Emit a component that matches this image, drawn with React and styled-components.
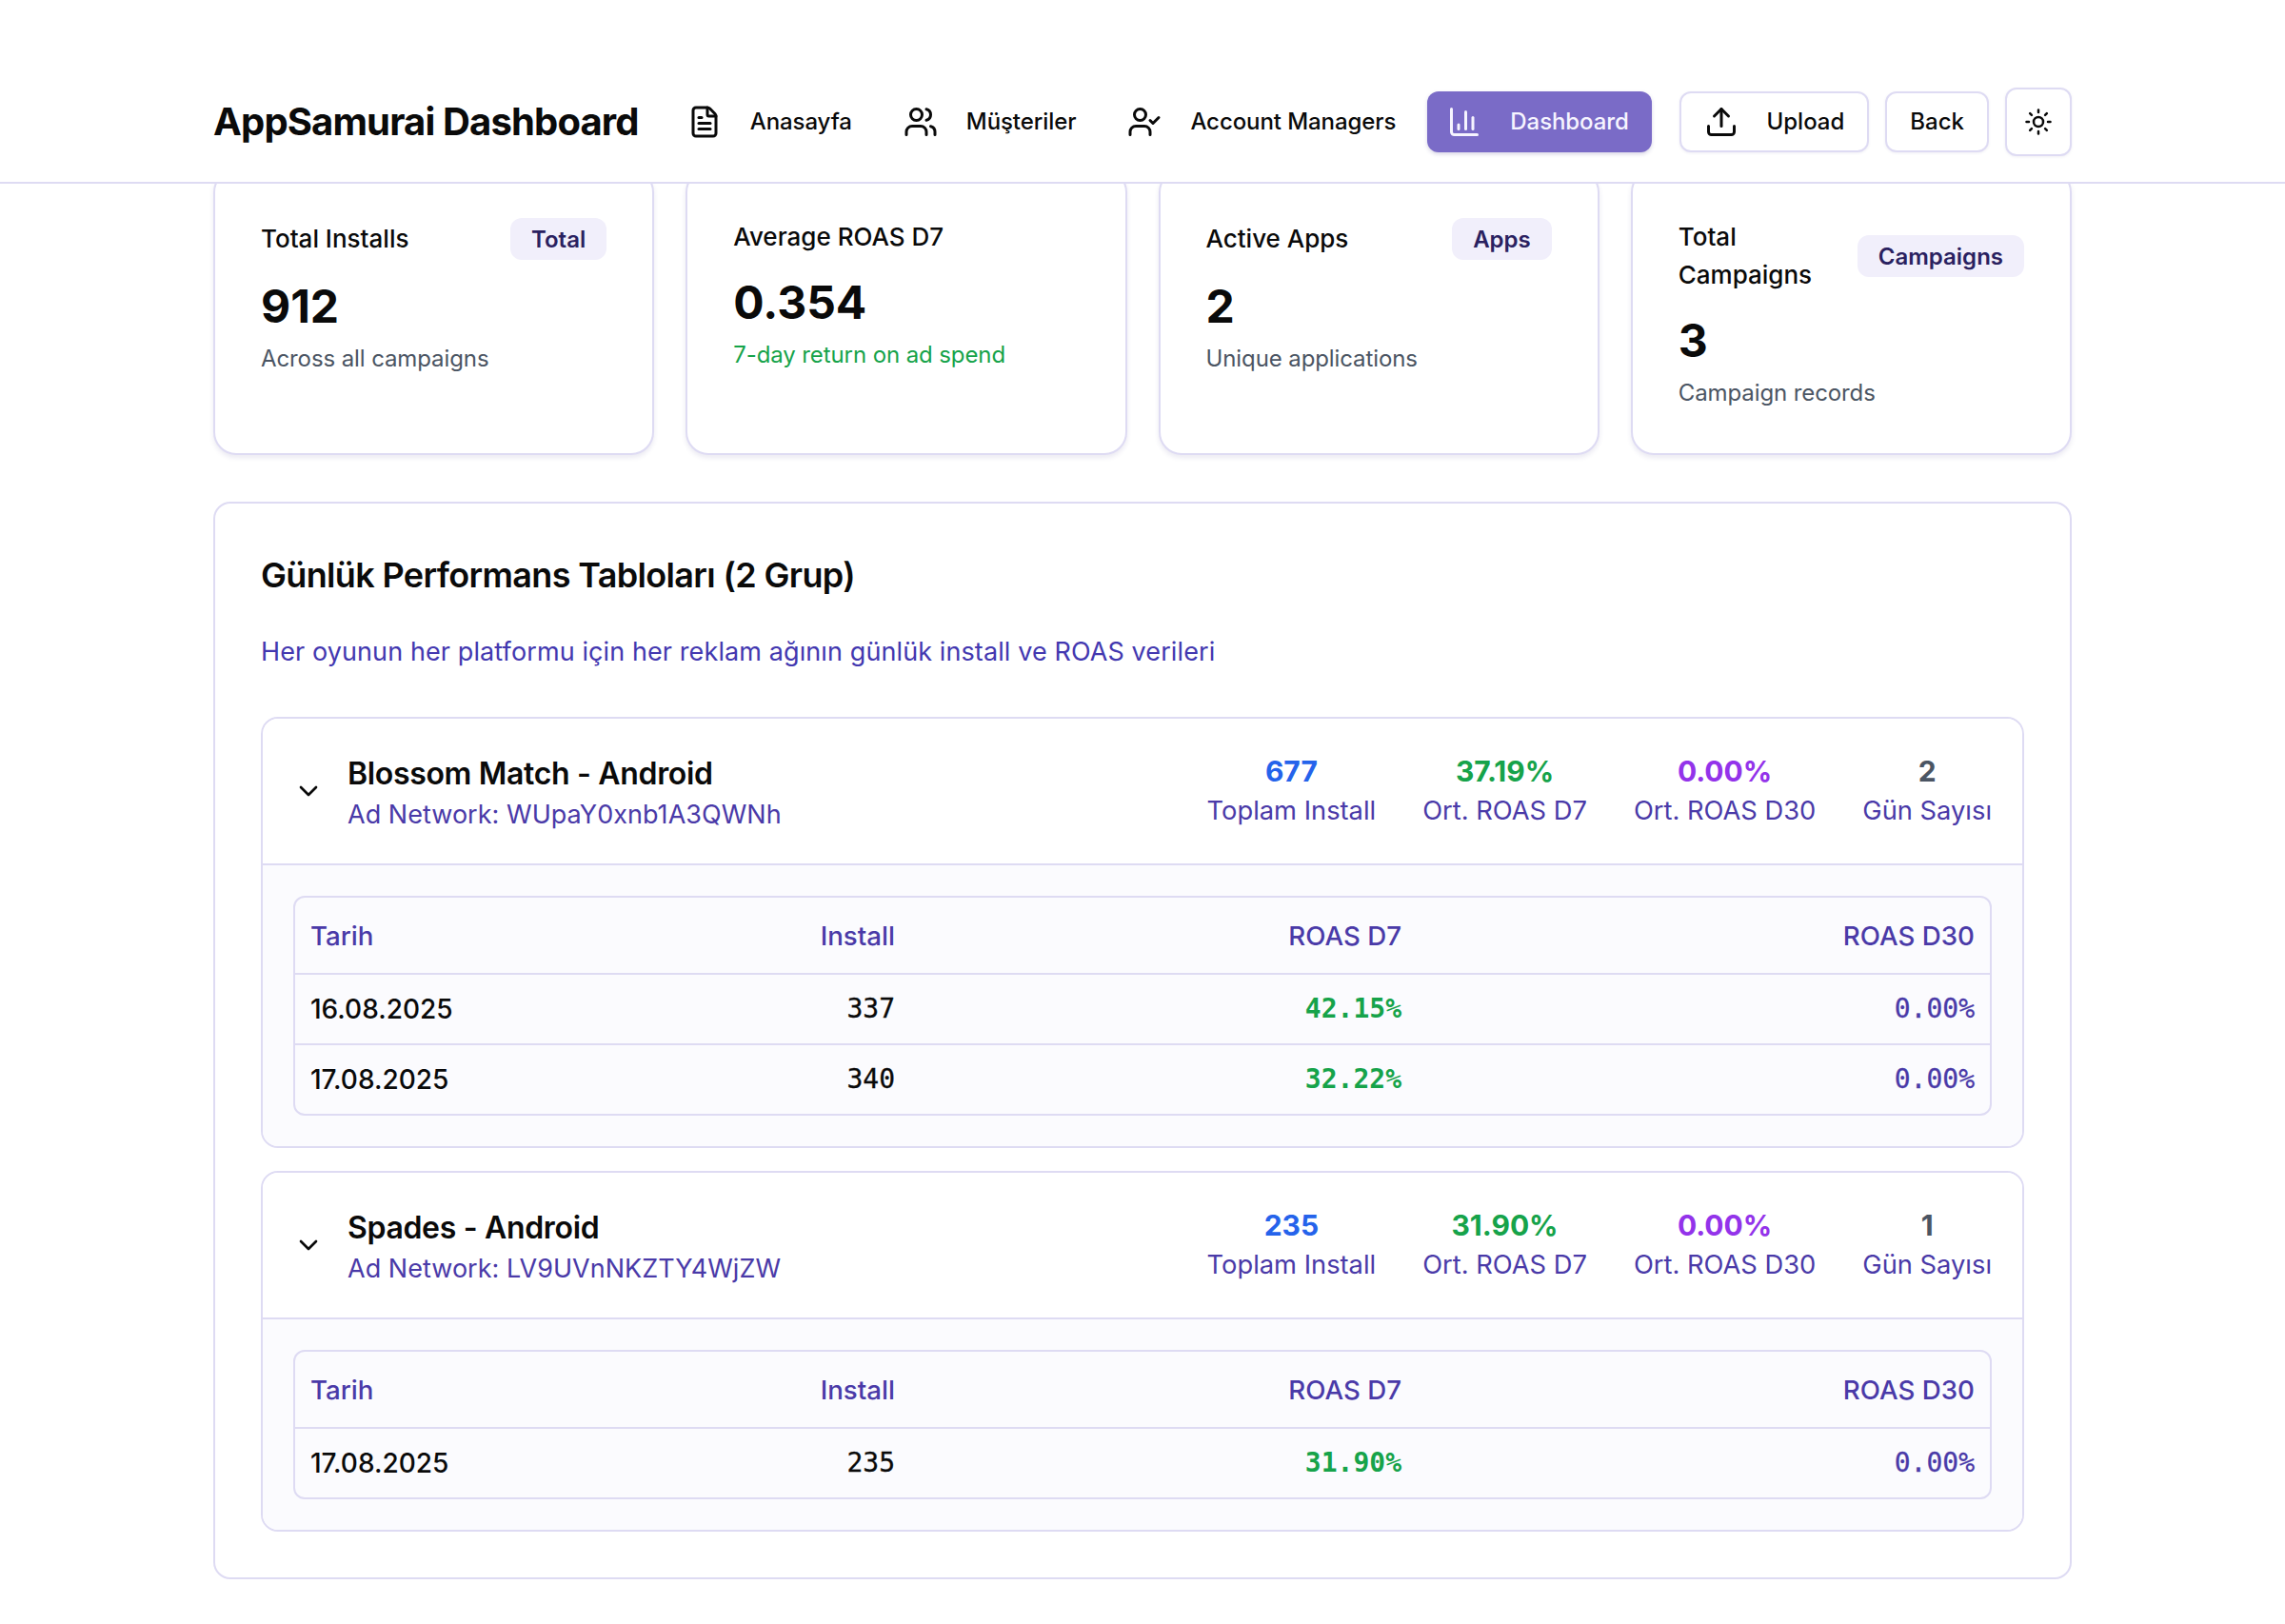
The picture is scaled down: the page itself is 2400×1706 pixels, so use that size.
import React from "react";
import styled, { createGlobalStyle } from "styled-components";
import { FileText, Users, UserCheck, ChartColumn, Upload, Sun, ChevronDown } from "lucide-react";

const cards = [
  { title: "Total Installs", badge: "Total", value: "912", note: "Across all campaigns" },
  { title: "Average ROAS D7", value: "0.354", note: "7-day return on ad spend", good: true },
  { title: "Active Apps", badge: "Apps", value: "2", note: "Unique applications" },
  { title: "Total Campaigns", badge: "Campaigns", value: "3", note: "Campaign records", narrow: true },
];

const groups = [
  {
    name: "Blossom Match - Android",
    network: "WUpaY0xnb1A3QWNh",
    installs: "677",
    d7: "37.19%",
    d30: "0.00%",
    days: "2",
    rows: [
      ["16.08.2025", "337", "42.15%", "0.00%"],
      ["17.08.2025", "340", "32.22%", "0.00%"],
    ],
  },
  {
    name: "Spades - Android",
    network: "LV9UVnNKZTY4WjZW",
    installs: "235",
    d7: "31.90%",
    d30: "0.00%",
    days: "1",
    rows: [["17.08.2025", "235", "31.90%", "0.00%"]],
  },
];

const App = () => {
  return (
    <>
      <GlobalStyle />
      <Header>
        <HeaderInner>
          <Brand>AppSamurai Dashboard</Brand>
          <Nav>
            <NavItem><FileText size={36} strokeWidth={2} />Anasayfa</NavItem>
            <NavItem><Users size={36} strokeWidth={2} />Müşteriler</NavItem>
            <NavItem><UserCheck size={36} strokeWidth={2} />Account Managers</NavItem>
            <NavItem $active><ChartColumn size={36} strokeWidth={2} />Dashboard</NavItem>
          </Nav>
          <Actions>
            <OutlineButton><Upload size={36} strokeWidth={2} />Upload</OutlineButton>
            <OutlineButton>Back</OutlineButton>
            <ThemeButton><Sun size={30} strokeWidth={2} /></ThemeButton>
          </Actions>
        </HeaderInner>
      </Header>
      <Main>
        <CardGrid>
          {cards.map((c) => (
            <Card key={c.title}>
              <CardHead>
                <CardTitle $narrow={c.narrow}>{c.title}</CardTitle>
                {c.badge && <Badge>{c.badge}</Badge>}
              </CardHead>
              <CardValue>{c.value}</CardValue>
              <CardNote $good={c.good}>{c.note}</CardNote>
            </Card>
          ))}
        </CardGrid>

        <Panel>
          <PanelTitle>Günlük Performans Tabloları (2 Grup)</PanelTitle>
          <PanelDesc>Her oyunun her platformu için her reklam ağının günlük install ve ROAS verileri</PanelDesc>
          <GroupList>
            {groups.map((g) => (
              <Group key={g.name}>
                <GroupHead>
                  <GroupLeft>
                    <ChevronDown size={32} strokeWidth={2} />
                    <GroupText>
                      <GroupName>{g.name}</GroupName>
                      <GroupNetwork>Ad Network: {g.network}</GroupNetwork>
                    </GroupText>
                  </GroupLeft>
                  <Stats>
                    <Stat><StatValue $color="#2563eb">{g.installs}</StatValue><StatLabel>Toplam Install</StatLabel></Stat>
                    <Stat><StatValue $color="#16a34a">{g.d7}</StatValue><StatLabel>Ort. ROAS D7</StatLabel></Stat>
                    <Stat><StatValue $color="#9333ea">{g.d30}</StatValue><StatLabel>Ort. ROAS D30</StatLabel></Stat>
                    <Stat><StatValue $color="#4b5563">{g.days}</StatValue><StatLabel>Gün Sayısı</StatLabel></Stat>
                  </Stats>
                </GroupHead>
                <GroupBody>
                  <TableWrap>
                    <TableHeadRow>
                      <HeadCell>Tarih</HeadCell>
                      <HeadCell $right>Install</HeadCell>
                      <HeadCell $right>ROAS D7</HeadCell>
                      <HeadCell $right>ROAS D30</HeadCell>
                    </TableHeadRow>
                    {g.rows.map((r) => (
                      <TableRow key={r[0]}>
                        <DateCell>{r[0]}</DateCell>
                        <NumCell>{r[1]}</NumCell>
                        <NumCell $color="#16a34a" $bold>{r[2]}</NumCell>
                        <NumCell $color="#4a3aa8">{r[3]}</NumCell>
                      </TableRow>
                    ))}
                  </TableWrap>
                </GroupBody>
              </Group>
            ))}
          </GroupList>
        </Panel>
      </Main>
    </>
  );
};

const GlobalStyle = createGlobalStyle`
  * { box-sizing: border-box; }
  body {
    margin: 0;
    background: #fff;
    color: #0a0a0a;
    font-family: Inter, "Noto Sans", sans-serif;
  }
`;

const Header = styled.header`
  position: relative;
  z-index: 2;
  height: 193px;
  background: #fff;
  border-bottom: 2px solid #dedbf3;
`;

const HeaderInner = styled.div`
  width: 1952px;
  height: 100%;
  margin: 0 auto;
  padding-top: 64px;
  display: flex;
  align-items: center;
`;

const Brand = styled.h1`
  margin: 0 30px 0 0;
  font-size: 40px;
  font-weight: 700;
  letter-spacing: -0.85px;
  white-space: nowrap;
`;

const Nav = styled.nav`
  display: flex;
  align-items: center;
  gap: 9px;
`;

const NavItem = styled.a`
  display: flex;
  align-items: center;
  gap: 30px;
  height: 64px;
  padding: 0 24px 0 21px;
  border-radius: 12px;
  font-size: 24px;
  font-weight: 500;
  letter-spacing: -0.08px;
  white-space: nowrap;
  color: ${({ $active }) => ($active ? "#f6f4ff" : "#0a0a0a")};
  background: ${({ $active }) => ($active ? "#7a6bc7" : "transparent")};
  box-shadow: ${({ $active }) => ($active ? "0 2px 4px rgba(60, 50, 130, 0.2)" : "none")};
`;

const Actions = styled.div`
  margin-left: auto;
  display: flex;
  align-items: center;
  gap: 17px;
`;

const OutlineButton = styled.button`
  display: flex;
  align-items: center;
  gap: 29px;
  height: 64px;
  padding: 0 24px;
  background: #fff;
  border: 2px solid #dedbf3;
  border-radius: 12px;
  color: #0a0a0a;
  font-family: inherit;
  font-size: 24px;
  font-weight: 500;
  box-shadow: 0 1px 3px rgba(60, 50, 130, 0.08);
`;

const ThemeButton = styled(OutlineButton)`
  width: 70px;
  height: 72px;
  padding: 0;
  justify-content: center;
`;

const Main = styled.main`
  width: 1952px;
  margin: 0 auto;
  padding-bottom: 48px;
`;

const CardGrid = styled.div`
  margin-top: -15px;
  display: grid;
  grid-template-columns: repeat(4, 1fr);
  gap: 33px;
`;

const Card = styled.section`
  height: 300px;
  padding: 49px 48px 48px;
  background: #fff;
  border: 2px solid #dedbf3;
  border-radius: 24px;
  box-shadow: 0 3px 5px rgba(60, 50, 130, 0.1);
`;

const CardHead = styled.div`
  display: flex;
  align-items: center;
  justify-content: space-between;
  gap: 16px;
`;

const CardTitle = styled.div`
  font-size: 26px;
  line-height: 40px;
  font-weight: 500;
  max-width: ${({ $narrow }) => ($narrow ? "160px" : "none")};
`;

const Badge = styled.span`
  padding: 0 22px;
  height: 44px;
  display: flex;
  align-items: center;
  background: #f1effb;
  border-radius: 12px;
  color: #2a2160;
  font-size: 24px;
  font-weight: 600;
`;

const CardValue = styled.div`
  margin-top: 19px;
  font-size: 48px;
  line-height: 60px;
  font-weight: 700;
`;

const CardNote = styled.div`
  margin-top: 7px;
  font-size: 24px;
  line-height: 36px;
  letter-spacing: -0.1px;
  color: ${({ $good }) => ($good ? "#16a34a" : "#4b5563")};
`;

const Panel = styled.section`
  margin-top: 49px;
  padding: 48px;
  background: #fff;
  border: 2px solid #dedbf3;
  border-radius: 18px;
`;

const PanelTitle = styled.h2`
  margin: 0;
  font-size: 36px;
  line-height: 54px;
  font-weight: 600;
  letter-spacing: -0.65px;
`;

const PanelDesc = styled.p`
  margin: 33px 0 0;
  font-size: 27px;
  line-height: 42px;
  letter-spacing: 0.1px;
  color: #4338b0;
`;

const GroupList = styled.div`
  margin-top: 47px;
  display: flex;
  flex-direction: column;
  gap: 24px;
`;

const Group = styled.div`
  border: 2px solid #dedbf3;
  border-radius: 18px;
  overflow: hidden;
`;

const GroupHead = styled.div`
  height: 152px;
  padding: 0 32px;
  display: flex;
  align-items: center;
  justify-content: space-between;
  background: #fff;
`;

const GroupLeft = styled.div`
  display: flex;
  align-items: center;
  gap: 25px;
`;

const GroupText = styled.div`
  padding-top: 5px;
`;

const GroupName = styled.div`
  font-size: 32px;
  line-height: 44px;
  font-weight: 600;
  letter-spacing: -0.33px;
`;

const GroupNetwork = styled.div`
  font-size: 27px;
  line-height: 42px;
  letter-spacing: 0.03px;
  color: #4a3aa8;
`;

const Stats = styled.div`
  display: flex;
  gap: 49px;
`;

const Stat = styled.div`
  text-align: center;
`;

const StatValue = styled.div`
  margin-bottom: 2px;
  font-size: 30px;
  line-height: 40px;
  font-weight: 700;
  color: ${({ $color }) => $color};
`;

const StatLabel = styled.div`
  font-size: 27.3px;
  line-height: 40px;
  color: #4a3aa8;
`;

const GroupBody = styled.div`
  padding: 32px;
  background: #fbfbfe;
  border-top: 2px solid #dedbf3;
`;

const TableWrap = styled.div`
  border: 2px solid #dedbf3;
  border-radius: 12px;
  overflow: hidden;
`;

const TableHeadRow = styled.div`
  display: grid;
  grid-template-columns: 401px 245px 532px 1fr;
  height: 79px;
  align-items: center;
`;

const TableRow = styled(TableHeadRow)`
  height: 74px;
  border-top: 2px solid #dedbf3;
`;

const HeadCell = styled.div`
  padding: 0 16px;
  font-size: 27.7px;
  font-weight: 500;
  color: #4a3aa8;
  text-align: ${({ $right }) => ($right ? "right" : "left")};
`;

const DateCell = styled.div`
  padding: 0 16px;
  font-size: 28px;
  font-weight: 500;
`;

const NumCell = styled.div`
  padding: 0 16px 2px;
  text-align: right;
  font-family: "DejaVu Sans Mono", "Liberation Mono", monospace;
  font-size: 28px;
  font-weight: ${({ $bold }) => ($bold ? 700 : 400)};
  -webkit-text-stroke: ${({ $bold }) => ($bold ? "0" : "0.3px")};
  color: ${({ $color }) => $color || "#0a0a0a"};
`;

export default App;
